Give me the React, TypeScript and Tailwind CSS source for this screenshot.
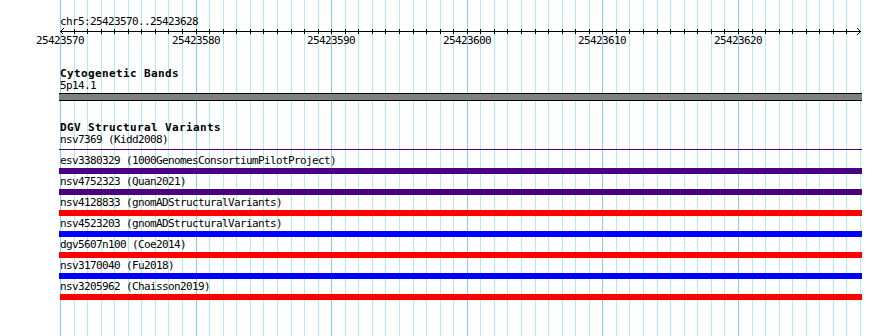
import React from "react";

const XS = Array.from({ length: 60 }, (_, i) => Math.round(60 + (i * 800) / 59));

function Grid() {
  return (
    <svg
      className="absolute left-0 top-0"
      width={890}
      height={336}
      shapeRendering="crispEdges"
    >
      {XS.map((x, i) => (
        <line
          key={i}
          x1={x + 0.5}
          x2={x + 0.5}
          y1={0}
          y2={336}
          stroke={i % 10 === 0 ? "#87cefa" : "#afeeee"}
          strokeWidth={1}
        />
      ))}
    </svg>
  );
}

const MONO = "font-['DejaVu_Sans_Mono','Liberation_Mono',monospace]";

function Ruler() {
  const labels = [0, 10, 20, 30, 40, 50];
  return (
    <svg width={890} height={20} className="block" shapeRendering="crispEdges">
      <line x1={60} x2={861} y1={3.5} y2={3.5} stroke="#000" strokeWidth={1} />
      {XS.slice(1, 59).map((x, i) => (
        <line key={i} x1={x + 0.5} x2={x + 0.5} y1={1} y2={6} stroke="#000" strokeWidth={1} />
      ))}
      <polyline points="63.5,0.5 60.5,3.5 63.5,6.5" fill="none" stroke="#000" strokeWidth={1} />
      <polyline points="856.5,-0.5 860.5,3.5 856.5,7.5" fill="none" stroke="#000" strokeWidth={1} />
      {labels.map((i) => (
        <text
          key={i}
          x={XS[i] - 24}
          y={16}
          fontFamily="'DejaVu Sans Mono', 'Liberation Mono', monospace"
          fontSize={11}
          letterSpacing={-0.62}
          fill="#000"
          shapeRendering="auto"
        >
          {String(25423570 + i)}
        </text>
      ))}
    </svg>
  );
}

function Label({ children }: { children: React.ReactNode }) {
  return (
    <div
      className={`${MONO} pl-[60px] h-[12px] text-[11px] leading-[12px] tracking-[-0.62px] text-black whitespace-nowrap`}
    >
      {children}
    </div>
  );
}

function Heading({ children, className = "" }: { children: React.ReactNode; className?: string }) {
  return (
    <div
      className={`${MONO} pl-[60px] h-[12px] text-[11px] leading-[12px] font-bold tracking-[0.38px] text-black whitespace-nowrap ${className}`}
    >
      {children}
    </div>
  );
}

const variants: { label: string; color: string; shift?: boolean }[] = [
  { label: "esv3380329 (1000GenomesConsortiumPilotProject)", color: "bg-[#4b0082]" },
  { label: "nsv4752323 (Quan2021)", color: "bg-[#4b0082]" },
  { label: "nsv4128833 (gnomADStructuralVariants)", color: "bg-[#ff0000]" },
  { label: "nsv4523203 (gnomADStructuralVariants)", color: "bg-[#0000ff]" },
  { label: "dgv5607n100 (Coe2014)", color: "bg-[#ff0000]" },
  { label: "nsv3170040 (Fu2018)", color: "bg-[#0000ff]" },
  { label: "nsv3205962 (Chaisson2019)", color: "bg-[#ff0000]", shift: true },
];

export default function App() {
  return (
    <div className="relative w-[890px] h-[336px] bg-white overflow-hidden">
      <Grid />
      <div className="relative flex flex-col pt-[16px]">
        <Label>chr5:25423570..25423628</Label>
        <Ruler />

        <Heading className="mt-[20px]">Cytogenetic Bands</Heading>
        <Label>5p14.1</Label>
        <div className="mt-[1px] ml-[59px] w-[803px] h-[8px] bg-[#808080] border-y border-black" />

        <Heading className="mt-[21px]">DGV Structural Variants</Heading>
        <Label>nsv7369 (Kidd2008)</Label>
        <div className="mt-[3px] ml-[59px] w-[803px] h-[1px] bg-[#4b0082]" />

        <div className="mt-[5px] flex flex-col gap-[2px]">
          {variants.map((v) => (
            <div key={v.label} className="flex flex-col">
              <Label>{v.label}</Label>
              <div
                className={`mt-[1px] h-[6px] ${v.color} ${v.shift ? "ml-[60px] w-[802px]" : "ml-[59px] w-[803px]"}`}
              />
            </div>
          ))}
        </div>
      </div>
    </div>
  );
}
